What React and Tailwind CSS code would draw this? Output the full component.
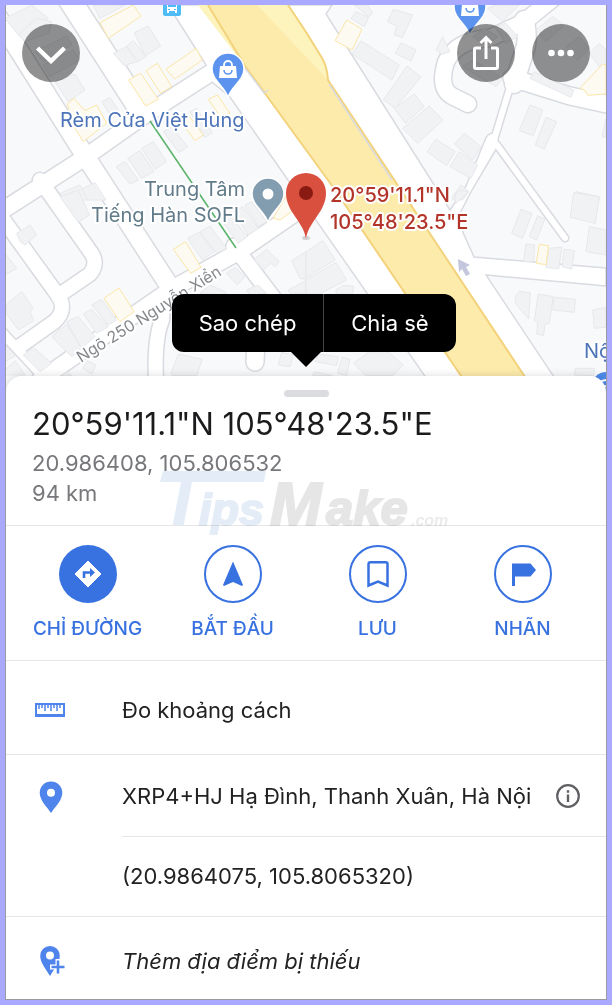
import { useState } from "react";

// Map geometry is grouped in quarters, each drawn on its own 3x grid.
const QUARTERS = [
  {
    id: "nw",
    transform: "translate(0 0) scale(0.3333)",
    grey: [
      "15,55 95,15 145,55 55,105",
      "280,15 375,15 300,55",
      "55,105 110,55 155,65 145,100 75,125",
      "105,155 200,108 215,135 130,185",
      "130,195 220,150 240,180 150,230",
      "165,245 225,222 255,270 205,305",
      "340,160 380,140 412,185 372,197",
      "380,138 400,122 438,170 412,185",
      "403,98 445,78 482,138 436,168",
      "306,305 330,292 360,340 335,355",
      "348,500 375,485 415,540 390,553",
      "383,475 420,452 462,515 425,535",
      "425,445 460,425 500,485 465,508",
      "490,395 515,380 563,440 537,458",
      "570,335 590,325 637,398 615,413",
      "240,570 285,548 318,600 260,600",
      "180,580 240,555 262,600 190,600",
    ],
    yellow: [
      "300,68 400,15 423,48 325,115",
      "386,240 422,220 475,298 437,318",
      "438,212 472,190 515,260 482,280",
      "498,208 588,145 607,180 525,237",
      "202,312 222,295 255,332 290,315 320,370 250,425 225,385",
      "625,298 652,285 690,340 660,350",
      "545,355 565,345 610,405 585,422 550,375",
    ],
  },
  {
    id: "ne",
    transform: "translate(306 0) scale(0.3333)",
    grey: [
      "135,55 150,35 188,52 175,80",
      "145,15 185,15 200,40 188,50",
      "245,65 262,28 320,45 290,112 265,105 272,78",
      "268,160 285,128 330,150 315,183",
      "138,162 165,123 280,195 258,240",
      "232,300 303,198 345,230 268,325",
      "265,325 325,282 355,320 298,370",
      "290,385 370,318 411,360 335,430",
      "363,455 390,418 448,455 422,497",
      "445,432 475,400 525,440 500,480",
      "432,500 460,455 515,495 495,535",
      "390,150 410,110 432,155 408,163",
      "470,200 500,180 590,235 570,260",
      "545,25 570,15 640,15 590,65",
      "500,110 535,85 575,110 540,140",
      "565,80 600,70 635,110 600,130",
      "690,90 740,50 775,75 720,125",
      "780,140 820,110 850,145 815,180",
      "850,160 880,130 900,150 900,195 880,200",
      "672,235 685,215 803,270 795,292",
      "640,392 672,315 710,330 682,407",
      "688,435 720,352 752,365 715,447",
      "888,410 900,355 900,412",
      "803,595 810,575 880,590 880,600 803,600",
      "440,590 465,555 488,575 470,600 440,600",
    ],
    yellow: ["87,122 122,60 168,88 138,150", "822,265 890,192 900,195 900,282 845,286 835,270"],
  },
  {
    id: "sw",
    transform: "translate(0 190) scale(0.3333)",
    grey: [
      "180,20 235,0 268,75 235,97",
      "50,130 90,105 110,135 75,165 60,155",
      "15,190 50,235 15,255",
      "18,345 65,305 100,355 90,365 102,392 55,420 18,370",
      "275,345 305,328 350,390 325,405",
      "250,372 275,358 325,410 290,430",
      "200,395 235,380 285,440 245,475",
      "155,440 200,402 245,475 215,500",
      "70,495 100,472 155,520 120,545",
      "15,465 45,498 15,515",
      "15,540 45,512 75,555 15,555",
      "248,535 262,512 288,525 275,552",
      "563,145 597,127 642,185 607,210",
      "600,125 630,108 680,175 650,190",
      "665,90 690,75 742,140 715,160",
      "700,65 730,50 775,115 745,135",
      "735,45 755,35 800,95 775,110",
      "680,250 705,232 735,260 712,285",
      "762,208 800,178 838,215 825,230 812,220 790,240",
      "875,212 918,185 918,268 900,265",
      "865,300 918,272 918,310 870,310",
      "600,310 630,285 675,305 680,315",
      "740,300 775,285 800,310 750,315",
      "515,545 535,492 607,508 590,557 515,557",
      "835,525 845,487 880,495 870,530",
      "190,555 200,545 215,557",
    ],
    yellow: ["520,178 557,155 603,232 572,250", "312,325 357,294 402,365 360,395", "820,85 860,15 895,50 840,90"],
  },
  {
    id: "se",
    transform: "translate(306 190) scale(0.3333)",
    grey: [
      "0,185 50,152 88,210 0,262",
      "0,268 90,218 122,270 40,312 0,312",
      "90,300 110,287 142,288 140,312 90,312",
      "617,130 645,58 678,70 650,145",
      "670,140 695,77 717,87 692,150",
      "793,82 803,8 880,20 868,100",
      "840,185 850,110 900,120 900,195",
      "653,215 660,162 686,165 682,215",
      "720,232 728,175 768,172 758,237",
      "768,230 775,177 806,182 797,238",
      "628,320 640,304 673,308 668,387 628,340",
      "685,392 697,312 742,320 730,400 718,402 712,437 692,432 695,398",
      "740,360 745,322 808,328 805,367",
      "860,360 900,352 900,412 865,415",
      "805,555 808,535 866,535 862,557",
      "142,520 190,485 245,485 292,525 260,557 180,557",
      "28,515 38,492 97,500 92,527",
      "95,550 108,502 132,508 122,557",
      "20,557 25,545 80,557",
      "447,15 460,0 488,5 450,40",
    ],
    yellow: ["691,220 700,163 728,167 720,224"],
  },
];

// [path, width] of every street
const STREETS = [
  ["M-4 14 L84 154 L172 290", 18],
  ["M0 212 L84 158 L142 117 L240 54", 16],
  ["M66 -6 L142 112", 22],
  ["M40 180 L92 254 Q98 264 90 274 L58 296", 14],
  ["M0 215 L54 290 Q70 308 54 322 L20 346", 14],
  ["M0 330 L48 382", 9],
  ["M40 380 L170 290 L240 251 L310 203", 16],
  ["M163 300 L162 320 Q154 340 156 380", 14],
  ["M234 246 L290 320", 15],
  ["M256 340 L255 362", 17],
  ["M556 -4 L524 22 L490 38 Q456 40 446 62 Q438 88 452 96 L468 104", 16],
  ["M512 78 L570 96 L612 105", 17],
  ["M514 84 L526 46 Q528 30 524 20", 18],
  ["M511 84 L493 143", 6],
  ["M497 145 L565 238", 6],
];

const AVENUE =
  "M168 5 L208 68 L212 82 L230 97 L436 392 H564 L486 275 L606 286 V268 L474 257 L457 219 L472 190 L498 146 Q500 134 492 133 Q487 134 485 140 L466 186 L450 210 L326 14 L332 5Z";

function PlacePin({ x, y, color, bag }) {
  return (
    <g transform={`translate(${x} ${y})`}>
      <path
        d="M0 29 C-2 18 -16 12 -16 0 A16 16 0 0 1 16 0 C16 12 2 18 0 29Z"
        fill={color}
        stroke="#fff"
        strokeWidth="1.5"
      />
      {bag ? (
        <g>
          <path d="M-8 -3 H8 L9 9 H-9Z" fill="#fff" />
          <path d="M-4 -2 V-4 A4 4 0 0 1 4 -4 V-2" fill="none" stroke="#fff" strokeWidth="1.8" />
          <path d="M-4 1 A4 4 0 0 0 4 1" fill="none" stroke={color} strokeWidth="1.6" />
        </g>
      ) : (
        <circle r="5.5" fill="#fff" />
      )}
    </g>
  );
}

function StreetMap() {
  return (
    <svg
      viewBox="6 5 600 387"
      preserveAspectRatio="xMidYMin slice"
      className="block h-full w-full font-['Inter','Noto_Sans',sans-serif]"
      role="img"
      aria-label="Bản đồ"
    >
      <rect x="-600" y="0" width="1800" height="400" fill="#f8f9fb" />
      <g fill="none" strokeLinecap="round" strokeLinejoin="round">
        {STREETS.map(([d, w]) => (
          <path key={d} d={d} stroke="#d9dbe0" strokeWidth={w + 3} />
        ))}
      </g>
      <path d={AVENUE} fill="#fff" stroke="#d9dbe0" strokeWidth="1.5" />
      <g fill="none" stroke="#fff" strokeLinecap="round" strokeLinejoin="round">
        {STREETS.map(([d, w]) => (
          <path key={d} d={d} strokeWidth={w} />
        ))}
      </g>
      {QUARTERS.map((q) => (
        <g key={q.id} transform={q.transform} strokeWidth="3" strokeLinejoin="round">
          {q.grey.map((p) => (
            <polygon key={p} points={p} fill="#f1f2f4" stroke="#e6e8eb" />
          ))}
          {q.yellow.map((p) => (
            <polygon key={p} points={p} fill="#fdfaf2" stroke="#fbe5a8" />
          ))}
        </g>
      ))}

      <path d="M198 5 L288 5 L306 32 L322 58 Q327 66 328 80 L535 392 H472 L333 187 L245 66Z" fill="#fcebab" />
      <path d="M198 5 H208 L245 66Z M257 5 L288 5 L306 32 L322 58 Q327 66 328 80Z" fill="#fdf3bd" />
      <path
        d="M208 5 L245 66 L333 187 L472 392 M288 5 L306 32 L322 58 Q327 66 328 80 L535 392"
        fill="none"
        stroke="#f3d27c"
        strokeWidth="2"
      />
      <path d="M245 68 L264 93 L268 90 M329 84 L392 180" fill="none" stroke="#d9dbe0" strokeWidth="1.5" />
      <path d="M150 121 L236 248" stroke="#58b368" strokeWidth="1.5" />
      <path d="M458 259 L470 265 L466 267 L470 274 L466 276 L462 269 L459 272Z" fill="#c3c6dc" />

      <g fontSize="20" stroke="#fff" strokeWidth="4" strokeLinejoin="round" paintOrder="stroke">
        <text x="60" y="127" fill="#4c74b8">Rèm Cửa Việt Hùng</text>
        <text x="245" y="196" textAnchor="end" fill="#617b8a">Trung Tâm</text>
        <text x="245" y="222" textAnchor="end" fill="#617b8a">Tiếng Hàn SOFL</text>
        <text x="584" y="358" fill="#4c74b8">Nội</text>
        <text x="330" y="202" fontWeight="500" fill="#b3352a">20°59'11.1"N</text>
        <text x="330" y="229" fontWeight="500" fill="#b3352a">105°48'23.5"E</text>
        <text transform="translate(81 363) rotate(-32)" fontSize="16" fill="#85888c">Ngõ 250 Nguyễn Xiển</text>
      </g>

      <rect x="163" y="-2" width="18" height="18" rx="2" fill="#4fbcf6" />
      <path d="M167 1 H177 V13 H175 V11 H169 V13 H167Z" fill="#fff" />
      <path d="M168 4 H176 V7 H168Z M168 9 h2 v1 h-2z M174 9 h2 v1 h-2z" fill="#4fbcf6" />
      <PlacePin x={228} y={69} color="#5b93ee" bag />
      <PlacePin x={470} y={7} color="#5b93ee" bag />
      <PlacePin x={268} y={194} color="#829db0" />
      <circle cx="606" cy="386" r="14" fill="#4c88e8" />
      <path d="M599 383 Q606 377 613 383 M602 388 Q606 384 610 388" fill="none" stroke="#fff" strokeWidth="2" />

      <ellipse cx="306" cy="238" rx="4" ry="2" fill="#000" opacity="0.15" />
      <path d="M306 239 C304 222 286 212 286 193 A20 20 0 0 1 326 193 C326 212 308 222 306 239Z" fill="#d9503f" />
      <circle cx="306" cy="193" r="7" fill="#8a1b13" />
    </svg>
  );
}

function RoundButton({ label, children }) {
  return (
    <button
      type="button"
      aria-label={label}
      className="flex size-[58px] items-center justify-center rounded-full bg-black/43 text-white"
    >
      {children}
    </button>
  );
}

function Watermark() {
  return (
    <svg
      viewBox="0 -20 300 100"
      aria-hidden="true"
      className="pointer-events-none absolute top-[70px] left-[152px] h-[100px] w-[300px] font-['Liberation_Sans',sans-serif] font-bold italic mix-blend-multiply"
    >
      <path d="M5 5 H108 L106 16 H2Z" fill="#e4edf7" />
      <g fill="#e4edf7" stroke="#e4edf7" strokeWidth="2">
        <text x="1" y="59" fontSize="76" stroke="none">T</text>
        <text x="41" y="59" fontSize="45">ips</text>
      </g>
      <g fill="#e6e6e6" stroke="#e6e6e6" strokeWidth="2">
        <text x="112" y="59" fontSize="62">M</text>
        <text x="168" y="59" fontSize="49">ake</text>
      </g>
      <text x="253" y="60" fontSize="16" fill="#ebebeb">.com</text>
    </svg>
  );
}

const ACTIONS = [
  {
    label: "CHỈ ĐƯỜNG",
    filled: true,
    icon: (
      <svg viewBox="0 0 28 28" className="size-7">
        <path d="M14 1 L27 14 L14 27 L1 14Z" fill="#fff" stroke="#fff" strokeLinejoin="round" />
        <path d="M10 18 V12.5 H17" fill="none" stroke="#3871e0" strokeWidth="2.6" />
        <path d="M16 8 L21 12.5 L16 17Z" fill="#3871e0" />
      </svg>
    ),
  },
  {
    label: "BẮT ĐẦU",
    icon: (
      <svg viewBox="0 0 28 28" className="size-7">
        <path d="M14 1.5 L24 25 L23 26 L14 22 L5 26 L4 25Z" fill="currentColor" />
      </svg>
    ),
  },
  {
    label: "LƯU",
    icon: (
      <svg viewBox="0 0 28 28" className="size-7">
        <path
          d="M4.5 25.5 V4 Q4.5 2.2 6.3 2.2 H21.7 Q23.5 2.2 23.5 4 V25.5 L14 21.5Z"
          fill="none"
          stroke="currentColor"
          strokeWidth="2.5"
        />
      </svg>
    ),
  },
  {
    label: "NHÃN",
    icon: (
      <svg viewBox="0 0 28 28" className="size-7">
        <path d="M3 3.5 H21.5 L27 10 L21.5 16.5 H6 V26 H3Z" fill="currentColor" />
      </svg>
    ),
  },
];

function RulerIcon() {
  return (
    <svg viewBox="0 0 32 16" className="h-4 w-8 text-[#4f84ec]">
      <path d="M2 2 H30 V14 H2Z" fill="#fff" stroke="currentColor" strokeWidth="2" />
      <path d="M1 13.5 H31" stroke="currentColor" strokeWidth="3" />
      <path
        d="M5 2 V7 M8 2 V6 M11 2 V9 M14 2 V6 M17 2 V9 M20 2 V6 M23 2 V9 M26 2 V6"
        stroke="currentColor"
        strokeWidth="1.5"
      />
    </svg>
  );
}

function PinIcon() {
  return (
    <svg viewBox="0 0 32 32" className="size-8 text-[#4f84ec]">
      <path
        fillRule="evenodd"
        d="M17 0.5 A11.3 11.3 0 0 1 28.3 11.8 C28.3 19.5 21 26 17 32 C13 26 5.7 19.5 5.7 11.8 A11.3 11.3 0 0 1 17 0.5Z M17 7.8 A4 4 0 1 0 17 15.8 A4 4 0 1 0 17 7.8Z"
        fill="currentColor"
      />
    </svg>
  );
}

function AddPinIcon() {
  return (
    <svg viewBox="0 0 32 32" className="size-8 text-[#4f84ec]">
      <path
        fillRule="evenodd"
        d="M16 1 A9.8 9.8 0 0 1 25.8 10.8 C25.8 18 19.5 25 16 31 C12.5 25 6.2 18 6.2 10.8 A9.8 9.8 0 0 1 16 1Z M16 6.5 A4 4 0 1 0 16 14.5 A4 4 0 1 0 16 6.5Z"
        fill="currentColor"
      />
      <path d="M24 14 V30 M16 22 H31" stroke="#fff" strokeWidth="5" />
      <path d="M24 15.5 V28.5 M17.5 22 H30.5" stroke="currentColor" strokeWidth="2.6" />
    </svg>
  );
}

export default function App() {
  const [menuOpen, setMenuOpen] = useState(true);

  return (
    <div className="min-h-screen bg-[#a9a9ff] p-[5px] font-['Inter','Noto_Sans',sans-serif]">
      <main className="overflow-hidden border-x border-b border-[#9a9aa0] bg-white">
        <section className="relative h-[387px] overflow-hidden">
          <StreetMap />
          <div className="absolute inset-x-4 top-[19px] flex items-center gap-[17px]">
            <RoundButton label="Đóng">
              <svg viewBox="0 0 34 22" className="h-[22px] w-[34px]">
                <path d="M3.5 6 L17 19 L30.5 6" fill="none" stroke="currentColor" strokeWidth="4.5" />
              </svg>
            </RoundButton>
            <span className="flex-1" />
            <RoundButton label="Chia sẻ vị trí">
              <svg viewBox="0 0 28 36" className="h-9 w-7" fill="none" stroke="currentColor" strokeWidth="3">
                <path d="M9 13 H4 Q2.5 13 2.5 14.5 V32 Q2.5 33.5 4 33.5 H24 Q25.5 33.5 25.5 32 V14.5 Q25.5 13 24 13 H19" />
                <path d="M14 24 V3 M8.5 8 L14 2.5 L19.5 8" />
              </svg>
            </RoundButton>
            <RoundButton label="Thêm">
              <svg viewBox="0 0 26 8" className="h-2 w-[26px]" fill="currentColor">
                <circle cx="3.5" cy="4" r="3.3" />
                <circle cx="13" cy="4" r="3.3" />
                <circle cx="22.5" cy="4" r="3.3" />
              </svg>
            </RoundButton>
          </div>

          {menuOpen ? (
            <div className="absolute top-[289px] left-1/2 -ml-[134px] flex h-[58px] w-[284px] rounded-xl bg-black text-[22px] text-white">
              <button type="button" onClick={() => setMenuOpen(false)} className="w-[152px] border-r border-[#444]">
                Sao chép
              </button>
              <button type="button" onClick={() => setMenuOpen(false)} className="flex-1">
                Chia sẻ
              </button>
              <svg viewBox="0 0 30 15" className="absolute top-full left-[119px] h-[15px] w-[30px]">
                <path d="M0 0 H30 L15 15Z" />
              </svg>
            </div>
          ) : null}
        </section>

        <section className="relative -mt-4 rounded-t-2xl bg-white shadow-[0_0_8px_rgba(0,0,0,0.15)]">
          <header className="border-b border-[#e6e6e6] px-[26px] pt-[14px] pb-[17px]">
            <div className="mx-auto h-[7px] w-[45px] rounded-full bg-[#dadce0]" />
            <h1 className="mt-2 text-[31px] leading-[38px] text-[#1b1b1d]">20°59'11.1"N 105°48'23.5"E</h1>
            <p className="mt-[5px] text-[22px] leading-[30px] text-[#77787b]">20.986408, 105.806532</p>
            <p className="text-[22px] leading-[30px] text-[#77787b]">94 km</p>
          </header>
          <Watermark />

          <nav className="grid grid-cols-4 border-b border-[#e6e6e6] pt-[19px] pr-[11px] pb-4 pl-[9px]">
            {ACTIONS.map((action) => (
              <button key={action.label} type="button" className="flex flex-col items-center gap-[11px] text-[#3871e0]">
                <span
                  className={
                    action.filled
                      ? "flex size-[58px] items-center justify-center rounded-full bg-[#3871e0]"
                      : "flex size-[58px] items-center justify-center rounded-full border-2 border-[#3871e0]"
                  }
                >
                  {action.icon}
                </span>
                <span className="text-[19px] leading-[30px] font-medium whitespace-nowrap">{action.label}</span>
              </button>
            ))}
          </nav>

          <ul className="text-[22px] leading-[30px] text-[#222]">
            <li className="border-b border-[#e6e6e6]">
              <button type="button" className="flex w-full items-center gap-14 pt-[34px] pb-[29px] pl-7 text-left">
                <RulerIcon />
                Đo khoảng cách
              </button>
            </li>
            <li className="flex gap-14 border-b border-[#e6e6e6] pl-7">
              <span className="pt-[26px]">
                <PinIcon />
              </span>
              <div className="flex-1">
                <div className="flex items-center justify-between border-b border-[#e6e6e6] pt-[26px] pr-[26px] pb-[25px]">
                  <span>XRP4+HJ Hạ Đình, Thanh Xuân, Hà Nội</span>
                  <button type="button" aria-label="Thông tin mã">
                    <svg viewBox="0 0 24 24" className="size-6 text-[#5f6064]">
                      <circle cx="12" cy="12" r="10.8" fill="none" stroke="currentColor" strokeWidth="2.2" />
                      <path d="M12 10.5 V18 M12 6.3 V8.8" stroke="currentColor" strokeWidth="2.4" />
                    </svg>
                  </button>
                </div>
                <p className="pt-6 pb-[25px]">(20.9864075, 105.8065320)</p>
              </div>
            </li>
            <li>
              <button type="button" className="flex w-full items-center gap-14 pt-7 pb-[22px] pl-7 text-left italic">
                <AddPinIcon />
                Thêm địa điểm bị thiếu
              </button>
            </li>
          </ul>
        </section>
      </main>
    </div>
  );
}
